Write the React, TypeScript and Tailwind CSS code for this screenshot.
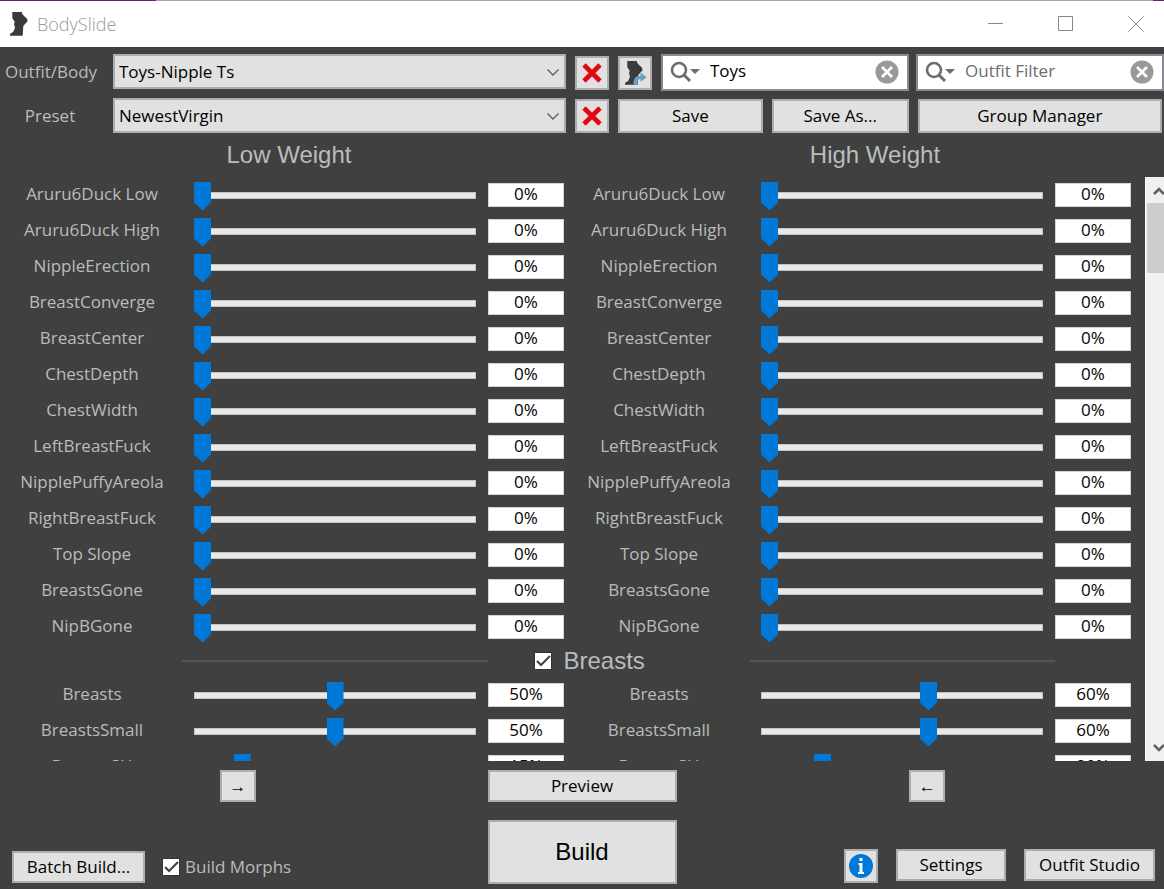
import { useState } from 'react'
import type { ReactNode } from 'react'

interface SliderData {
  name: string
  low: number
  high: number
}

const toySliders: SliderData[] = [
  { name: 'Aruru6Duck Low', low: 0, high: 0 },
  { name: 'Aruru6Duck High', low: 0, high: 0 },
  { name: 'NippleErection', low: 0, high: 0 },
  { name: 'BreastConverge', low: 0, high: 0 },
  { name: 'BreastCenter', low: 0, high: 0 },
  { name: 'ChestDepth', low: 0, high: 0 },
  { name: 'ChestWidth', low: 0, high: 0 },
  { name: 'LeftBreastFuck', low: 0, high: 0 },
  { name: 'NipplePuffyAreola', low: 0, high: 0 },
  { name: 'RightBreastFuck', low: 0, high: 0 },
  { name: 'Top Slope', low: 0, high: 0 },
  { name: 'BreastsGone', low: 0, high: 0 },
  { name: 'NipBGone', low: 0, high: 0 },
]

const breastSliders: SliderData[] = [
  { name: 'Breasts', low: 50, high: 60 },
  { name: 'BreastsSmall', low: 50, high: 60 },
  { name: 'BreastsSH', low: 15, high: 20 },
]

function BodyIcon({ className, arrow }: { className?: string; arrow?: boolean }) {
  return (
    <svg viewBox="0 0 24 24" className={className} aria-hidden="true">
      <path
        d="M4.3 0H14v1.5L16 4l2.7 2.3 1 2.7-2.4 2.7-2 2.3-.6 9.7H2V22l3.3-2.3L7 15.7l-1-3.4.7-2.6-2.4-3.4z"
        fill="#3b3b3b"
      />
      {arrow && (
        <path d="M10.5 23.7c0-5 1.2-8.7 5-8.7h2v-3.5l6.2 4.7-6.2 4.5V18c-2 0-3 1.4-3 5.7z" fill="#68a0bf" />
      )}
    </svg>
  )
}

function Button({ children, className = '', label }: { children: ReactNode; className?: string; label?: string }) {
  return (
    <button
      type="button"
      aria-label={label}
      className={`flex items-center justify-center border-2 border-[#adadad] bg-[#e1e1e1] text-black hover:bg-[#e5f1fb] ${className}`}
    >
      {children}
    </button>
  )
}

function DeleteButton({ label }: { label: string }) {
  return (
    <Button label={label} className="h-[34px] w-[34px] shrink-0">
      <svg viewBox="0 0 20 20" className="h-5 w-5" aria-hidden="true">
        <path d="M2 2l16 16M18 2L2 18" stroke="#e20613" strokeWidth="4.6" />
      </svg>
    </Button>
  )
}

function Dropdown({ id, value }: { id: string; value: string }) {
  return (
    <div className="relative self-start pl-1">
      <select id={id} className="block h-[35px] w-full appearance-none border-2 border-[#adadad] bg-[#e1e1e1] px-1 text-black">
        <option>{value}</option>
      </select>
      <svg viewBox="0 0 12 7" className="pointer-events-none absolute top-[15px] right-[7px] h-[7px] w-3" aria-hidden="true">
        <path d="M.5 .5l5.500 5.500 5.500-5.500" fill="none" stroke="#606060" strokeWidth="1.4" />
      </svg>
    </div>
  )
}

function SearchBox({ label, initial }: { label: string; initial: string }) {
  const [text, setText] = useState(initial)

  return (
    <div className="flex h-[37px] min-w-0 flex-1 items-center border-2 border-[#8a8b92] bg-white pr-1 pb-[2px] pl-[7px]">
      <svg viewBox="0 0 30 22" className="h-[22px] w-[30px] shrink-0" aria-hidden="true">
        <circle cx="9" cy="9" r="7" fill="none" stroke="#6d6d6d" strokeWidth="2.6" />
        <path d="M14 14l6 6" stroke="#6d6d6d" strokeWidth="3" />
        <path d="M20 8h10l-5 5z" fill="#6d6d6d" />
      </svg>
      <input
        type="text"
        aria-label={label}
        placeholder={label}
        value={text}
        onChange={(e) => setText(e.target.value)}
        className="h-7 min-w-0 flex-1 bg-transparent pb-[2px] pl-[10px] text-black outline-none placeholder:text-[#6d6d6d]"
      />
      <button type="button" aria-label={`Clear ${label}`} onClick={() => setText('')} className="mr-1 shrink-0">
        <svg viewBox="0 0 24 24" className="h-6 w-6" aria-hidden="true">
          <circle cx="12" cy="12" r="11.5" fill="#999" />
          <path d="M7 7l10 10M17 7L7 17" stroke="#fff" strokeWidth="2.6" />
        </svg>
      </button>
    </div>
  )
}

function CheckBox({ label, className = '' }: { label: string; className?: string }) {
  return (
    <label className={`flex items-center ${className}`}>
      <span className="relative flex">
        <input type="checkbox" defaultChecked className="peer h-[18px] w-[18px] appearance-none border border-[#333] bg-white" />
        <svg viewBox="0 0 18 18" className="pointer-events-none absolute inset-0 hidden peer-checked:block" aria-hidden="true">
          <path d="M3 9l4 4 9-9" fill="none" stroke="#404040" strokeWidth="2" />
        </svg>
      </span>
      {label}
    </label>
  )
}

function SliderControl({ name, side, initial }: { name: string; side: string; initial: number }) {
  const [value, setValue] = useState(initial)
  const id = `${side}-${name.replace(/\s/g, '-')}`

  return (
    <div className="grid h-9 flex-1 grid-cols-[182px_1fr_79px] items-center">
      <label htmlFor={id} className="pb-[2px] pl-[2px] text-center">{name}</label>
      <div className="flex px-3">
        <input
          id={id}
          type="range"
          min={0}
          max={100}
          value={value}
          onChange={(e) => setValue(Number(e.target.value))}
          className="h-[30px] w-full appearance-none bg-transparent [&::-webkit-slider-runnable-track]:h-[7px] [&::-webkit-slider-runnable-track]:bg-[#e7eaea] [&::-webkit-slider-runnable-track]:shadow-[inset_0_0_0_1px_#c4c4c4] [&::-webkit-slider-thumb]:-mt-[10px] [&::-webkit-slider-thumb]:h-[29px] [&::-webkit-slider-thumb]:w-[17px] [&::-webkit-slider-thumb]:appearance-none [&::-webkit-slider-thumb]:bg-[#0078d7] [&::-webkit-slider-thumb]:[clip-path:polygon(0_0,100%_0,100%_72%,50%_100%,0_72%)]"
        />
      </div>
      <input
        type="text"
        aria-label={`${name} ${side} value`}
        value={`${value}%`}
        onChange={(e) => setValue(Math.min(100, parseInt(e.target.value) || 0))}
        className="h-6 w-[76px] border border-[#d4d4d4] bg-white pb-[2px] text-center text-black"
      />
    </div>
  )
}

function SliderRow({ slider }: { slider: SliderData }) {
  return (
    <div className="flex">
      <SliderControl name={slider.name} side="low" initial={slider.low} />
      <SliderControl name={slider.name} side="high" initial={slider.high} />
    </div>
  )
}

export default function App() {
  return (
    <div className="flex h-screen flex-col overflow-hidden bg-[#404040] font-['Open_Sans','Noto_Sans',sans-serif] text-[17px] leading-6 text-[#b9bcbc]">
      {/* Desktop edge above the window */}
      <div className="flex h-px shrink-0">
        <div className="w-[156px] bg-[#68217a]" />
        <div className="flex-1 bg-[#a6a6a6]" />
        <div className="w-[11px] bg-[#68217a]" />
      </div>

      {/* Title bar */}
      <header className="flex h-[46px] shrink-0 items-center bg-white pl-2 text-[#999]">
        <BodyIcon className="h-6 w-6" />
        <h1 className="flex-1 pl-[5px] text-[18px] font-light">BodySlide</h1>
        <div className="flex items-center gap-[54px] pr-5">
          <button type="button" aria-label="Minimize">
            <svg viewBox="0 0 16 16" className="h-4 w-4"><path d="M0 7.5h15" stroke="#888" /></svg>
          </button>
          <button type="button" aria-label="Maximize">
            <svg viewBox="0 0 16 16" className="h-4 w-4"><path d="M.5.5h14v14H.5z" fill="none" stroke="#888" /></svg>
          </button>
          <button type="button" aria-label="Close">
            <svg viewBox="0 0 16 16" className="h-4 w-4"><path d="M.5.5l15 15M15.5.5l-15 15" stroke="#888" /></svg>
          </button>
        </div>
      </header>

      {/* Outfit and preset selection */}
      <section className="grid shrink-0 grid-cols-[100px_minmax(0,457fr)_34px_minmax(0,546fr)] items-center gap-x-[9px] gap-y-[7px] pt-[7px]">
        <label htmlFor="outfit" className="pb-[2px] pl-[2px] text-center">Outfit/Body</label>
        <Dropdown id="outfit" value="Toys-Nipple Ts" />
        <DeleteButton label="Clear outfit" />
        <div className="flex items-center gap-[7px]">
          <Button label="Choose outfit" className="mr-[2px] h-[34px] w-[34px] shrink-0">
            <BodyIcon className="h-6 w-6" arrow />
          </Button>
          <SearchBox label="Group Filter" initial="Toys" />
          <SearchBox label="Outfit Filter" initial="" />
        </div>

        <label htmlFor="preset" className="text-center">Preset</label>
        <Dropdown id="preset" value="NewestVirgin" />
        <DeleteButton label="Delete preset" />
        <div className="flex gap-[9px] pr-[2px]">
          <Button className="h-[34px] flex-[144]">Save</Button>
          <Button className="h-[34px] flex-[136]">Save As...</Button>
          <Button className="h-[34px] flex-[246]">Group Manager</Button>
        </div>
      </section>

      <section className="flex h-11 shrink-0 items-center pr-[10px] font-['Liberation_Sans',sans-serif] text-2xl">
        <h2 className="flex-1 pl-[10px] text-center">Low Weight</h2>
        <h2 className="flex-1 pl-7 text-center">High Weight</h2>
      </section>

      {/* Sliders */}
      <main className="flex min-h-0 flex-1">
        <div className="min-w-0 flex-1 overflow-hidden pr-[11px]">
          {toySliders.map((slider) => (
            <SliderRow key={slider.name} slider={slider} />
          ))}
          <div className="flex h-8 items-center pr-[79px] pl-[182px]">
            <div className="h-0.5 flex-1 bg-[#555]" />
            <CheckBox label="Breasts" className="w-[262px] gap-3 pl-[46px] font-['Liberation_Sans',sans-serif] text-2xl" />
            <div className="h-0.5 flex-1 bg-[#555]" />
          </div>
          {breastSliders.map((slider) => (
            <SliderRow key={slider.name} slider={slider} />
          ))}
        </div>
        <div className="w-[19px] overflow-hidden border-l border-white bg-[#f0f0f0]">
          <div className="flex h-full w-[26px] flex-col items-center">
            <button type="button" aria-label="Scroll up" className="flex h-[26px] items-center">
              <svg viewBox="0 0 12 9" className="h-[9px] w-3"><path d="M1 8l5-5 5 5" fill="none" stroke="#606060" strokeWidth="2.6" /></svg>
            </button>
            <div className="h-[70px] w-6 bg-[#cdcdcd]" />
            <button type="button" aria-label="Scroll down" className="mt-auto flex h-[26px] items-center">
              <svg viewBox="0 0 12 9" className="h-[9px] w-3"><path d="M1 1l5 5 5-5" fill="none" stroke="#606060" strokeWidth="2.6" /></svg>
            </button>
          </div>
        </div>
      </main>

      {/* Actions */}
      <footer className="grid shrink-0 grid-cols-[1fr_189px_1fr] gap-y-[18px] pt-[9px] pb-[5px]">
        <div className="flex justify-center pr-[12px]">
          <Button label="Copy low to high" className="h-8 w-9">→</Button>
        </div>
        <Button className="h-8">Preview</Button>
        <div className="flex justify-center pl-[14px]">
          <Button label="Copy high to low" className="h-8 w-9">←</Button>
        </div>

        <div className="flex items-end gap-[17px] pb-px pl-3">
          <Button className="h-8 w-[133px]">Batch Build...</Button>
          <CheckBox label="Build Morphs" className="h-8 gap-[5px]" />
        </div>
        <Button className="h-16 font-['Liberation_Sans',sans-serif] text-2xl">Build</Button>
        <div className="flex items-end justify-end gap-[18px] pr-[9px] pb-px">
          <Button label="About" className="h-[34px] w-[34px]">
            <svg viewBox="0 0 24 24" className="h-6 w-6" aria-hidden="true">
              <circle cx="12" cy="12" r="12" fill="#0078d7" />
              <path d="M10.500 4h3v3h-3zM9.500 9h4v9h1.500v2h-6v-2h1.500v-7H9.500z" fill="#fff" />
            </svg>
          </Button>
          <Button className="mb-[2px] h-8 w-[110px]">Settings</Button>
          <Button className="mb-[2px] h-8 w-[131px]">Outfit Studio</Button>
        </div>
      </footer>
    </div>
  )
}
